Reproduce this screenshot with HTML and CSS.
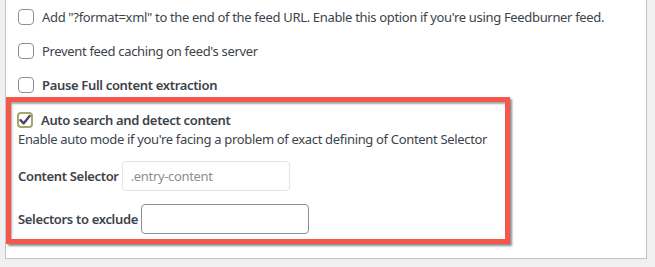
FILE: index.html
```html
<!DOCTYPE html>
<html lang="en">
<head>
    <meta charset="UTF-8">
    <meta name="viewport" content="width=device-width, initial-scale=1.0">
    <title>Feed settings</title>
    <link rel="stylesheet" href="styles.css">
</head>
<body>
    <div class="panel">
        <div class="options">
            <label class="option">
                <span class="box"></span>
                <span>Add "?format=xml" to the end of the feed URL. Enable this option if you're using Feedburner feed.</span>
            </label>
            <label class="option">
                <span class="box"></span>
                <span>Prevent feed caching on feed's server</span>
            </label>
            <label class="option strong">
                <span class="box"></span>
                <span>Pause Full content extraction</span>
            </label>
        </div>
        <div class="highlight">
            <label class="option strong">
                <span class="box checked">
                    <svg width="12" height="12" viewBox="0 0 12 12"><path d="M1.5 6.2 L4.6 9.4 L10.6 2" fill="none" stroke="#533f6e" stroke-width="2.4" stroke-linecap="round" stroke-linejoin="round"/></svg>
                </span>
                <span>Auto search and detect content</span>
            </label>
            <p class="hint">Enable auto mode if you're facing a problem of exact defining of Content Selector</p>
            <div class="field">
                <span class="field-label">Content Selector</span>
                <input type="text" class="text-input" placeholder=".entry-content" disabled>
            </div>
            <div class="field">
                <span class="field-label">Selectors to exclude</span>
                <input type="text" class="text-input">
            </div>
        </div>
    </div>
</body>
</html>
```

FILE: styles.css
```css
body {
    margin: 0;
    background: #f0f0f1;
    font-family: 'Noto Sans', 'Open Sans', sans-serif;
    font-size: 13px;
    letter-spacing: -0.33px;
    color: #3c434a;
}
.panel {
    margin-left: 5px;
    width: 640px;
    background: #fff;
    border: 1px solid #c3c4c7;
    border-top: none;
    padding-bottom: 14px;
}
.options {
    display: flex;
    flex-direction: column;
    gap: 10px;
    padding: 5px 0 0 12px;
}
.option {
    display: flex;
    align-items: center;
    gap: 8px;
    height: 24px;
}
.strong {
    font-weight: 600;
}
.box {
    width: 14px;
    height: 14px;
    border: 1px solid #8c8f94;
    border-radius: 4px;
    display: flex;
    align-items: center;
    justify-content: center;
}
.box.checked {
    width: 12px;
    height: 12px;
    border: 2px solid #a0a866;
    margin-left: -1px;
}
.highlight {
    width: 487px;
    border: 5px solid #f4574b;
    box-shadow: 2px 2px 2px rgba(0, 0, 0, 0.45), inset 1px 2px 2px rgba(0, 0, 0, 0.35);
    padding: 8px 0 5px 7px;
}
.highlight .option {
    height: 20px;
}
.hint {
    margin: 0 0 13px;
    line-height: 18px;
}
.field {
    display: flex;
    align-items: center;
    gap: 3px;
    font-weight: 600;
}
.field + .field {
    margin-top: 13px;
}
.text-input {
    width: 168px;
    height: 30px;
    box-sizing: border-box;
    border: 1px solid #8c8f94;
    border-radius: 4px;
    padding: 0 8px;
    font-family: inherit;
    font-size: 13px;
    letter-spacing: inherit;
    background: #fff;
}
.text-input:disabled {
    border-color: #e2e4e7;
}
.text-input::placeholder {
    color: #8c8f94;
}
```
